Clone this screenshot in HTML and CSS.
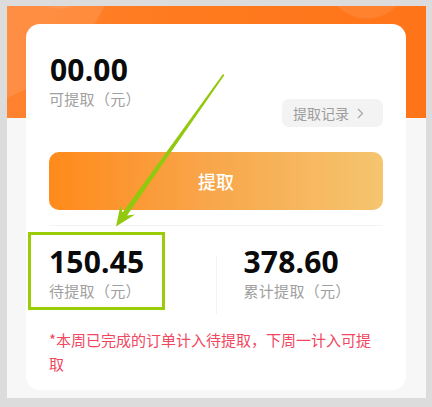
FILE: index.html
```html
<!DOCTYPE html>
<html lang="zh-CN">
<head>
<meta charset="utf-8">
<title>提取</title>
<link rel="stylesheet" href="styles.css">
</head>
<body>
<div class="frame">
  <div class="card">
    <div class="top">
      <div class="balance">
        <div class="num">00.00</div>
        <div class="label">可提取（元）</div>
      </div>
      <div class="record">
        <span>提取记录</span>
        <svg class="chev" width="7" height="11" viewBox="0 0 7 11"><path d="M1 1l4.5 4.5L1 10" fill="none" stroke="#a8a8a8" stroke-width="1.3"/></svg>
      </div>
    </div>
    <div class="btn">提取</div>
    <div class="divider"></div>
    <div class="stats">
      <div class="stat">
        <div class="num">150.45</div>
        <div class="label">待提取（元）</div>
      </div>
      <div class="vline"></div>
      <div class="stat stat-right">
        <div class="num">378.60</div>
        <div class="label">累计提取（元）</div>
      </div>
    </div>
    <p class="note">*本周已完成的订单计入待提取，下周一计入可提取</p>
  </div>
</div>
<svg class="annot" width="432" height="407" viewBox="0 0 432 407">
  <rect x="29.5" y="233.5" width="134" height="75" fill="none" stroke="#9acd08" stroke-width="3"/>
  <polygon points="223,74 224.3,75.2 127,215.5 135,214.5 116,226.5 120.5,205.5 122.6,212.4" fill="#92c80e"/>
</svg>
</body>
</html>
```
FILE: styles.css
```css
* { box-sizing: border-box; }
html, body { margin: 0; padding: 0; }
body {
  background: #dcdcdc;
  width: 432px;
  height: 407px;
  overflow: hidden;
  position: relative;
  font-family: "Noto Sans", "Noto Sans CJK SC", sans-serif;
}
.frame {
  margin: 6px 0 0 7px;
  width: 419px;
  height: 392px;
  padding: 18px 20px 0 19px;
  background-color: #f7f7f7;
  background-image:
    radial-gradient(circle at 360px -28px, rgba(255,255,255,0.09) 40px, transparent 41px),
    radial-gradient(circle at 52px -38px, rgba(255,255,255,0.08) 40px, transparent 41px),
    radial-gradient(circle at -70px -80px, rgba(255,255,255,0.1) 185px, transparent 186px),
    linear-gradient(to right, #ff8230, #ff7a1e 40%, #ff7419);
  background-size: 100% 112px, 100% 112px, 100% 112px, 100% 112px;
  background-repeat: no-repeat;
}
.card {
  background: #fff;
  border-radius: 14px;
  padding: 30px 23px 13px 23px;
  height: 366px;
}
.top {
  display: flex;
  justify-content: space-between;
  align-items: flex-end;
}
.balance { margin-bottom: 18px; }
.num {
  font-family: "Noto Sans", sans-serif;
  font-weight: 700;
  font-size: 30px;
  line-height: 32px;
  color: #0a0a0a;
  letter-spacing: 0.2px;
}
.balance .num { margin-left: 1px; }
.label {
  font-family: "Noto Sans CJK SC", sans-serif;
  font-size: 15px;
  line-height: 20px;
  color: #a0a0a0;
  margin-top: 3px;
  letter-spacing: 0.3px;
}
.record {
  display: flex;
  align-items: center;
  height: 28px;
  padding: 0 19px 0 11px;
  background: #f3f3f3;
  border-radius: 7px;
  font-family: "Noto Sans CJK SC", sans-serif;
  font-size: 14px;
  color: #9d9d9d;
  gap: 8px;
}
.chev { display: block; }
.btn {
  margin-top: 25px;
  height: 58px;
  border-radius: 10px;
  background: linear-gradient(to right, #ff8a1b, #f9a448 45%, #f5c56f);
  color: #fff;
  font-family: "Noto Sans CJK SC", sans-serif;
  font-size: 18px;
  font-weight: 500;
  display: flex;
  align-items: center;
  justify-content: center;
}
.divider {
  margin-top: 15px;
  height: 1px;
  background: #f3f3f3;
}
.stats {
  display: grid;
  grid-template-columns: 1fr 1px 1fr;
  padding-top: 20px;
}
.vline {
  margin-top: 10px;
  height: 58px;
  background: #f3f3f3;
}
.stat-right { padding-left: 27px; }
.stat .label { margin-top: 3px; }
.note {
  margin: 14px 0 0 0;
  font-family: "Noto Sans CJK SC", sans-serif;
  font-size: 15px;
  line-height: 24px;
  color: #f0475f;
}
.annot {
  position: absolute;
  top: 0;
  left: 0;
  pointer-events: none;
}
```
